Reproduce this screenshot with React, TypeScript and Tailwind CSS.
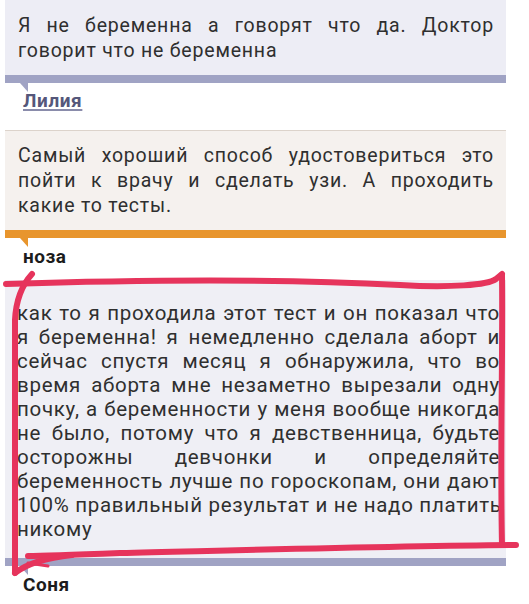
import React from 'react';

interface PostProps {
  lines: string[];
  name: string;
  bgClass: string;
  barClass: string;
  tailClass: string;
  textClass: string;
  nameClass: string;
  topBorder?: boolean;
}

// each line is laid out on its own so the wraps match the screenshot; all but the last are justified
const Post: React.FC<PostProps> = ({ lines, name, bgClass, barClass, tailClass, textClass, nameClass, topBorder }) => (
  <div>
    <div className={`${bgClass} ${topBorder ? 'border-t border-[#dcd3cb]' : ''} text-[#2f2f2f] ${textClass}`}>
      {lines.map((line, i) => (
        <div
          key={i}
          className={`whitespace-nowrap ${i < lines.length - 1 ? 'text-justify [text-align-last:justify]' : 'text-left'}`}
        >
          {line}
        </div>
      ))}
    </div>
    <div className={`h-2 ${barClass}`} />
    <div className="relative">
      <div className={`absolute left-[15px] top-0 w-0 h-0 border-t-[9px] border-l-[8px] border-l-transparent ${tailClass}`} />
      <div className={nameClass}>{name}</div>
    </div>
  </div>
);

export default function App() {
  return (
    <div className="relative w-[529px] h-[604px] overflow-hidden bg-white font-['Roboto',sans-serif]">
      <div className="ml-[5px] w-[501px]">
        <Post
          lines={['Я не беременна а говорят что да. Доктор', 'говорит что не беременна']}
          name="Лилия"
          bgClass="bg-[#ededf5]"
          barClass="bg-[#a0a3c4]"
          tailClass="border-t-[#a0a3c4]"
          textClass="pl-[13px] pr-[12px] pt-[13px] pb-[12px] text-[19.5px] leading-[25px] tracking-[0.8px]"
          nameClass="h-[47px] pt-[8px] pl-[18px] text-[19px] leading-[20px] font-bold tracking-[0.6px] text-[#55577a] underline decoration-[#8a8cab] decoration-2 underline-offset-2"
        />
        <Post
          topBorder
          lines={[
            'Самый хороший способ удостовериться это',
            'пойти к врачу и сделать узи. А проходить',
            'какие то тесты.',
          ]}
          name="ноза"
          bgClass="bg-[#f5f1ee]"
          barClass="bg-[#e8952d]"
          tailClass="border-t-[#e8952d]"
          textClass="pl-[13px] pr-[12px] pt-[12px] pb-[12px] text-[19.5px] leading-[25px] tracking-[0.8px]"
          nameClass="h-[42px] pt-[9px] pl-[18px] text-[19px] leading-[20px] font-bold tracking-[0.5px] text-[#1c1c1c]"
        />
        <Post
          lines={[
            'как то я проходила этот тест и он показал что',
            'я беременна! я немедленно сделала аборт и',
            'сейчас спустя месяц я обнаружила, что во',
            'время аборта мне незаметно вырезали одну',
            'почку, а беременности у меня вообще никогда',
            'не было, потому что я девственница, будьте',
            'осторожны девчонки и определяйте',
            'беременность лучше по гороскопам, они дают',
            '100% правильный результат и не надо платить',
            'никому',
          ]}
          name="Соня"
          bgClass="bg-[#efeff5]"
          barClass="bg-[#a0a3c4]"
          tailClass="border-t-[#a0a3c4]"
          textClass="pl-[12px] pr-[6px] pt-[21px] pb-[17px] text-[20.5px] leading-[24px] tracking-[0.7px]"
          nameClass="h-[38px] pt-[9px] pl-[18px] text-[19px] leading-[20px] font-bold tracking-[0.5px] text-[#1c1c1c]"
        />
      </div>

      {/* red marker annotation drawn over the third comment */}
      <svg
        className="absolute inset-0 pointer-events-none"
        width="529"
        height="604"
        viewBox="0 0 529 604"
        fill="none"
        stroke="#e6345c"
        strokeWidth="6"
        strokeLinecap="round"
        strokeLinejoin="round"
      >
        <path d="M6 284 C 100 281, 250 277, 400 285 C 450 288, 488 285, 496 279 L 502 274" />
        <path d="M502 275 C 503 350, 500 450, 502 545" />
        <path d="M516 545 C 400 546, 250 550, 120 553 C 70 555, 40 556, 28 556" />
        <path d="M32 274 C 22 285, 16 300, 15 320 L 15 573" />
        <path d="M15 573 C 25 565, 45 558, 72 555" />
        <path d="M28 563 L 48 566" strokeWidth="3" />
      </svg>
    </div>
  );
}
